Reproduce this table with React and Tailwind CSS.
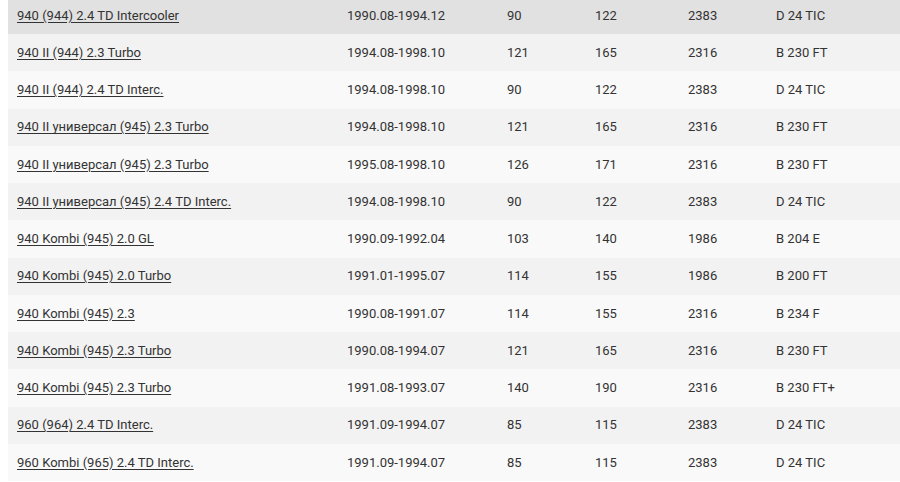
const rows = [
  ["940 (944) 2.4 TD Intercooler", "1990.08-1994.12", "90", "122", "2383", "D 24 TIC"],
  ["940 II (944) 2.3 Turbo", "1994.08-1998.10", "121", "165", "2316", "B 230 FT"],
  ["940 II (944) 2.4 TD Interc.", "1994.08-1998.10", "90", "122", "2383", "D 24 TIC"],
  ["940 II универсал (945) 2.3 Turbo", "1994.08-1998.10", "121", "165", "2316", "B 230 FT"],
  ["940 II универсал (945) 2.3 Turbo", "1995.08-1998.10", "126", "171", "2316", "B 230 FT"],
  ["940 II универсал (945) 2.4 TD Interc.", "1994.08-1998.10", "90", "122", "2383", "D 24 TIC"],
  ["940 Kombi (945) 2.0 GL", "1990.09-1992.04", "103", "140", "1986", "B 204 E"],
  ["940 Kombi (945) 2.0 Turbo", "1991.01-1995.07", "114", "155", "1986", "B 200 FT"],
  ["940 Kombi (945) 2.3", "1990.08-1991.07", "114", "155", "2316", "B 234 F"],
  ["940 Kombi (945) 2.3 Turbo", "1990.08-1994.07", "121", "165", "2316", "B 230 FT"],
  ["940 Kombi (945) 2.3 Turbo", "1991.08-1993.07", "140", "190", "2316", "B 230 FT+"],
  ["960 (964) 2.4 TD Interc.", "1991.09-1994.07", "85", "115", "2383", "D 24 TIC"],
  ["960 Kombi (965) 2.4 TD Interc.", "1991.09-1994.07", "85", "115", "2383", "D 24 TIC"],
];

export default function App() {
  return (
    <div className="w-[900px] h-[482px] overflow-hidden bg-white pl-2 font-['Roboto',sans-serif] text-[13px] text-[#333]">
      <table className="-mt-[3.25px] w-[892px] border-collapse">
        <tbody>
          {rows.map((r, i) => (
            <tr
              key={i}
              className={`h-[37.25px] ${i === 0 ? "bg-[#e1e1e1]" : i % 2 === 1 ? "bg-[#f2f2f2]" : "bg-[#f9f9f9]"}`}
            >
              <td className="w-[330px] pl-[9px]">
                <a href="#" className="underline underline-offset-2 text-[#333]">{r[0]}</a>
              </td>
              <td className="w-[160px] pl-[9px]">{r[1]}</td>
              <td className="w-[88px] pl-[9px]">{r[2]}</td>
              <td className="w-[93px] pl-[9px]">{r[3]}</td>
              <td className="w-[88px] pl-[9px]">{r[4]}</td>
              <td className="pl-[9px]">{r[5]}</td>
            </tr>
          ))}
        </tbody>
      </table>
    </div>
  );
}
